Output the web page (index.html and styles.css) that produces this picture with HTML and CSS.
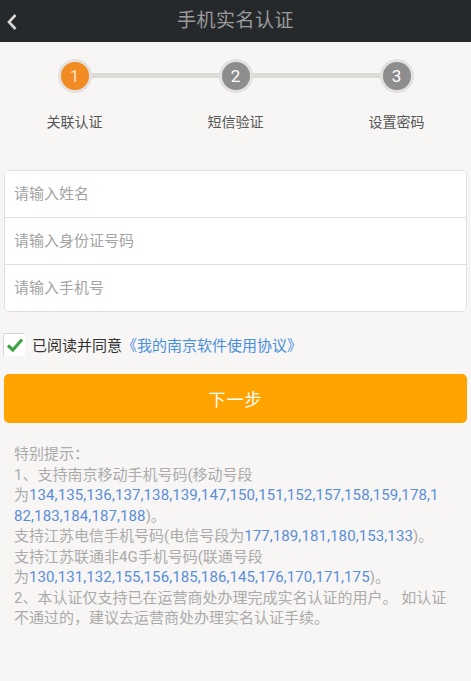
FILE: index.html
```html
<!DOCTYPE html>
<html lang="zh-CN">
  <head>
    <meta charset="UTF-8" />
    <meta name="viewport" content="width=device-width, initial-scale=1.0" />
    <title>手机实名认证</title>
    <link rel="stylesheet" href="styles.css">
  </head>
  <body>
    <header class="topbar">
      <a href="#" class="topbar__back">
        <svg width="12" height="18" viewBox="0 0 12 18">
          <path d="M9.5 2 L3 9 L9.5 16" fill="none" stroke="#d8d8d8" stroke-width="2.6" />
        </svg>
      </a>
      <h1 class="topbar__title">手机实名认证</h1>
      <span></span>
    </header>

    <div class="steps">
      <div class="step step_active">
        <div class="step__num">1</div>
        <div class="step__label">关联认证</div>
      </div>
      <div class="step">
        <div class="step__num">2</div>
        <div class="step__label">短信验证</div>
      </div>
      <div class="step">
        <div class="step__num">3</div>
        <div class="step__label">设置密码</div>
      </div>
    </div>

    <form class="form">
      <div class="fields">
        <input class="fields__input" type="text" placeholder="请输入姓名" autofocus />
        <input class="fields__input" type="text" placeholder="请输入身份证号码" />
        <input class="fields__input" type="tel" placeholder="请输入手机号" />
      </div>

      <label class="agree">
        <span class="agree__box">
          <svg width="18" height="16" viewBox="0 0 18 16">
            <path d="M2 8.5 L6.8 13 L16 2.5" fill="none" stroke="#3da448" stroke-width="3.2" />
          </svg>
        </span>
        已阅读并同意<a href="#" class="agree__link">《我的南京软件使用协议》</a>
      </label>

      <button class="next" type="button">下一步</button>
    </form>

    <div class="tips">
      特别提示：<br />
      1、支持南京移动手机号码(移动号段<br />
      为<span class="num">134,135,136,137,138,139,147,150,151,152,157,158,159,178,1</span><br />
      <span class="num">82,183,184,187,188</span>)。<br />
      支持江苏电信手机号码(电信号段为<span class="num">177,189,181,180,153,133</span>)。<br />
      支持江苏联通非4G手机号码(联通号段<br />
      为<span class="num">130,131,132,155,156,185,186,145,176,170,171,175</span>)。<br />
      2、本认证仅支持已在运营商处办理完成实名认证的用户。 如认证<br />
      不通过的，建议去运营商处办理实名认证手续。
    </div>
  </body>
</html>
```

FILE: styles.css
```css
body {
  margin: 0;
  background: #f7f6f4;
  font-family: Roboto, "Noto Sans CJK SC", sans-serif;
  color: #333;
}

.topbar {
  display: grid;
  grid-template-columns: 40px 1fr 40px;
  align-items: center;
  height: 42px;
  background: #26292b;
}
.topbar__back {
  display: flex;
  padding-left: 6px;
  padding-top: 2px;
}
.topbar__title {
  margin: 0;
  text-align: center;
  font-size: 19px;
  font-weight: normal;
  color: #9b9b9b;
  letter-spacing: 0.5px;
  padding-bottom: 5px;
}

/* шаги */
.steps {
  position: relative;
  display: grid;
  grid-template-columns: repeat(3, 161px);
  justify-content: center;
  padding-top: 17px;
}
.steps::before {
  content: '';
  position: absolute;
  top: 31px;
  left: calc(50% - 161px);
  width: 322px;
  height: 5px;
  background: #dddbd8;
}
.step {
  position: relative;
  display: flex;
  flex-direction: column;
  align-items: center;
}
.step__num {
  width: 28px;
  height: 28px;
  border: 3px solid #e3e1df;
  border-radius: 50%;
  background: #8d8d8d;
  color: #fff;
  font-size: 17px;
  line-height: 28px;
  text-align: center;
}
.step_active .step__num {
  background: #f28c22;
  color: #fde3c6;
}
.step__label {
  margin-top: 19px;
  font-size: 14px;
  line-height: 20px;
  color: #555;
}

/* форма */
.form {
  margin: 38px 4px 0;
}
.fields {
  display: flex;
  flex-direction: column;
  background: #fff;
  border: 1px solid #e1e0de;
  border-radius: 5px;
  overflow: hidden;
}
.fields__input {
  height: 46px;
  padding: 0 9px;
  border: 0;
  border-top: 1px solid #e1e0de;
  font: 15px Roboto, "Noto Sans CJK SC", sans-serif;
  color: #333;
  caret-color: #222;
  outline: none;
  background: #fff;
}
.fields__input:first-child {
  border-top: 0;
}
.fields__input::placeholder {
  color: #a3a3a3;
}

.agree {
  display: flex;
  align-items: center;
  height: 24px;
  margin-top: 20px;
  margin-left: -1px;
  font-size: 15px;
  color: #333;
}
.agree__box {
  display: flex;
  align-items: center;
  justify-content: center;
  width: 21px;
  height: 22px;
  margin-right: 7px;
  background: #fff;
  border-left: 1px solid #d4d4d4;
  border-top: 1px solid #d4d4d4;
  border-radius: 2px 2px 0 0;
}
.agree__link {
  color: #4a8ee0;
  text-decoration: none;
}

.next {
  display: block;
  width: 100%;
  height: 49px;
  margin-top: 18px;
  border: 0;
  border-radius: 5px;
  background: #ffa300;
  color: #fff;
  font: 17px Roboto, "Noto Sans CJK SC", sans-serif;
  letter-spacing: 1px;
}

/* подсказки */
.tips {
  margin-top: 21px;
  padding: 0 4px 20px 14px;
  font-size: 15px;
  line-height: 20.5px;
  color: #ababab;
  white-space: nowrap;
}
.num {
  color: #5a8ed8;
  letter-spacing: 0.1px;
}
```
